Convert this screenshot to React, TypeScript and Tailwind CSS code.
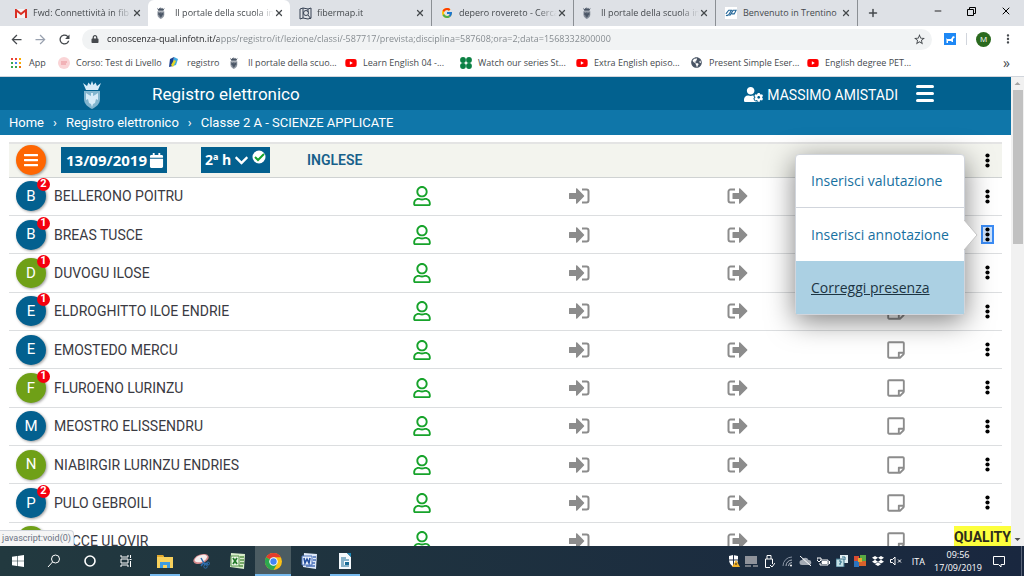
import { ReactNode, useState } from 'react';

import { FaBars, FaCalendar, FaChevronDown, FaDropbox, FaGlobeAmericas, FaLock, FaRegStickyNote, FaRegUser, FaUserCog, FaYoutube } from 'react-icons/fa';
import { FcGoogle } from 'react-icons/fc';
import { LuMinus, LuPlus, LuX } from 'react-icons/lu';
import { MdArrowBack, MdArrowForward, MdMoreVert, MdRefresh, MdStarBorder } from 'react-icons/md';

type Student = { name: string; green?: boolean; badge?: number };

const students: Student[] = [
	{ name: 'BELLERONO POITRU', badge: 2 },
	{ name: 'BREAS TUSCE', badge: 1 },
	{ name: 'DUVOGU ILOSE', badge: 1, green: true },
	{ name: 'ELDROGHITTO ILOE ENDRIE', badge: 1 },
	{ name: 'EMOSTEDO MERCU' },
	{ name: 'FLUROENO LURINZU', badge: 1, green: true },
	{ name: 'MEOSTRO ELISSENDRU' },
	{ name: 'NIABIRGIR LURINZU ENDRIES', green: true },
	{ name: 'PULO GEBROILI', badge: 2 },
	{ name: 'RUCCE ULOVIR', green: true },
];

function Crest({ className }: { className: string }) {
	return (
		<svg viewBox="0 0 18 28" className={className} fill="currentColor" aria-hidden="true">
			<path d="M0 2l4 3 1.500-3.500L7.500 4 9 0l1.500 4 2-2.500L14 5l4-3-3 7H3z" />
			<path d="M1 10h16v8c0 5-4 8-8 10-4-2-8-5-8-10z" opacity=".6" />
			<path d="M3 12l3 2 2 1V12h2v3l2-1 3-2v7l-2-1-1 4-2 1-1 3-1-3-2-1-1-4-2 1z" />
		</svg>
	);
}

function MapIcon() {
	return (
		<svg viewBox="0 0 13 13" className="size-[13px] text-gray-700" fill="none" stroke="currentColor" aria-hidden="true">
			<path d="M1 2l3-1v10l-3 1zM4 1l5 1 3-1v10l-3 1-5-1M9 2v3" />
			<circle cx="7" cy="6" r="2.500" />
			<path d="M9 8l3 4" />
		</svg>
	);
}

function Gmail() {
	return (
		<svg viewBox="0 0 12 9" className="w-3" aria-hidden="true">
			<path d="M1 0h10v9H1z" fill="#f4f4f4" />
			<path d="M1 9V1l5 4 5-4v8" fill="none" stroke="#d93025" strokeWidth="2" />
		</svg>
	);
}

function Trentino() {
	return (
		<svg viewBox="0 0 13 12" className="size-3 bg-white" fill="none" stroke="#27699b" strokeWidth="1.200" aria-hidden="true">
			<path d="M1 7l3-4 3 0-3 5-2 1M5 9l4-6 3 0-2 4-3 0M1 9l3-1M4 3l4 0" />
		</svg>
	);
}

const tabs = [
	{ title: 'Fwd: Connettività in fib', icon: <Gmail /> },
	{ title: 'Il portale della scuola in', icon: <Crest className="h-3 text-gray-600" />, active: true },
	{ title: 'fibermap.it', icon: <MapIcon /> },
	{ title: 'depero rovereto - Cerca', icon: <FcGoogle className="size-3" /> },
	{ title: 'Il portale della scuola in', icon: <Crest className="h-3 text-gray-600" /> },
	{ title: 'Benvenuto in Trentino', icon: <Trentino />, whole: true },
];

function TabStrip() {
	return (
		<header className="flex h-[26px] shrink-0 bg-[#dee1e6] pl-[6px] text-[9px] text-[#45494d]">
			{tabs.map((tab, i) => (
				<div
					key={i}
					className={`flex w-[142px] min-w-0 items-center pr-[6px] pl-[9px] ${tab.active ? 'rounded-t-md bg-white' : i > 1 ? 'border-r border-[#8b8f94] bg-clip-padding' : ''}`}
				>
					<span className="flex w-[18px] shrink-0 items-center">{tab.icon}</span>
					<span className={`min-w-0 flex-1 overflow-hidden whitespace-nowrap ${tab.whole ? '' : 'mask-r-from-80%'}`}>{tab.title}</span>
					<button type="button" aria-label="Chiudi scheda" className="shrink-0">
						<LuX className="size-[10px]" strokeWidth={3} />
					</button>
				</div>
			))}
			<button type="button" aria-label="Nuova scheda" className="ml-[9px]">
				<LuPlus className="size-3" strokeWidth={3} />
			</button>
			<div className="ml-auto flex items-center gap-6 pr-[12px] pb-1 text-black">
				<button type="button" aria-label="Riduci">
					<LuMinus className="size-[10px]" />
				</button>
				<button type="button" aria-label="Ripristina">
					<svg viewBox="0 0 9 9" className="size-[9px]" fill="none" stroke="currentColor">
						<path d="M.500 2.500h6v6h-6zM2.500 2.500v-2h6v6h-2" />
					</svg>
				</button>
				<button type="button" aria-label="Chiudi">
					<LuX className="size-3" />
				</button>
			</div>
		</header>
	);
}

function Toolbar() {
	return (
		<div className="flex h-[26px] shrink-0 items-center bg-white text-[#45494d]">
			<div className="flex w-[82px] shrink-0 items-center gap-[9px] pl-[9px]">
				<button type="button" aria-label="Indietro">
					<MdArrowBack className="size-[15px]" />
				</button>
				<button type="button" aria-label="Avanti" className="text-gray-400">
					<MdArrowForward className="size-[15px]" />
				</button>
				<button type="button" aria-label="Ricarica">
					<MdRefresh className="size-[15px]" />
				</button>
			</div>
			<div className="flex h-[21px] flex-1 items-center rounded-full bg-[#f1f3f4] pr-[6px] pl-[9px]">
				<FaLock className="size-2" />
				<input
					type="text"
					aria-label="Indirizzo"
					defaultValue="conoscenza-qual.infotn.it/apps/registro/it/lezione/classi/-587717/prevista;disciplina=587608;ora=2;data=1568332800000"
					className="ml-2 flex-1 bg-[linear-gradient(90deg,#202124_112px,#80868b_112px)] bg-clip-text text-[9px] text-transparent outline-none"
				/>
				<button type="button" aria-label="Aggiungi ai preferiti">
					<MdStarBorder className="size-[13px]" />
				</button>
			</div>
			<div className="flex items-center pl-3">
				<button type="button" aria-label="Estensione" className="size-3 bg-[#1e88f5] text-white">
					<svg viewBox="0 0 12 12" fill="currentColor">
						<path d="M2 5l1 1h4l2-3 2 1-1 1-1 1v3H8L7 8H4v2H2.500V7z" />
					</svg>
				</button>
				<span className="ml-[10px] h-3 w-px bg-gray-300" />
				<button type="button" className="ml-[9px] size-[15px] rounded-full bg-[#2b6a1f] text-[8px] text-white">
					M
				</button>
				<button type="button" aria-label="Menu" className="mr-[9px] ml-[10px]">
					<MdMoreVert className="size-[14px]" />
				</button>
			</div>
		</div>
	);
}

const youtube = <FaYoutube className="size-3 text-[#f00]" />;

const bookmarks = [
	{
		label: 'App',
		width: 'w-[47px]',
		icon: (
			<svg viewBox="0 0 10 10" className="size-[10px]">
				{['#ea4335', '#ea4335', '#f9ab00', '#34a853', '#4285f4', '#f9ab00', '#34a853', '#34a853', '#e8710a'].map((fill, i) => (
					<rect key={i} x={(i % 3) * 4} y={Math.floor(i / 3) * 4} width="2" height="2" fill={fill} />
				))}
			</svg>
		),
	},
	{
		label: 'Corso: Test di Livello',
		width: 'w-[111px]',
		icon: (
			<svg viewBox="0 0 12 12" className="size-3">
				<circle cx="6" cy="6" r="6" fill="#fad4d6" />
				<path d="M3 5h6M3 7h5" stroke="#e99097" />
			</svg>
		),
	},
	{
		label: 'registro',
		width: 'w-[61px]',
		icon: (
			<svg viewBox="0 0 10 11" className="h-[11px]">
				<path d="M1 2l4-2-1 9-4 1z" fill="#1a3f8f" />
				<path d="M5 0l4 2-2 6-3 1z" fill="#3fa9e0" />
				<path d="M2 8l3-5 2 1-3 6z" fill="#e4d626" />
			</svg>
		),
	},
	{ label: 'Il portale della scuo...', width: 'w-[115px]', icon: <Crest className="h-3 text-gray-600" /> },
	{ label: 'Learn English 04 -...', width: 'w-[115px]', icon: youtube },
	{
		label: 'Watch our series St...',
		width: 'w-[116px]',
		icon: (
			<svg viewBox="0 0 12 12" className="size-3" fill="#0b8043">
				<circle cx="3" cy="3" r="2.900" />
				<circle cx="9" cy="3" r="2.900" />
				<circle cx="3" cy="9" r="2.900" />
				<circle cx="9" cy="9" r="2.900" />
			</svg>
		),
	},
	{ label: 'Extra English episo...', width: 'w-[115px]', icon: youtube },
	{ label: 'Present Simple Eser...', width: 'w-[116px]', icon: <FaGlobeAmericas className="size-[11px] text-gray-600" /> },
	{ label: 'English degree PET...', width: 'w-[115px]', icon: youtube },
];

function BookmarkBar() {
	return (
		<nav aria-label="Preferiti" className="flex h-[25px] shrink-0 items-center border-b border-gray-300 bg-white pb-[3px] pl-[11px] text-[9px] text-[#45494d]">
			{bookmarks.map((item, i) => (
				<a key={i} href="#" className={`flex shrink-0 items-center whitespace-nowrap ${item.width}`}>
					<span className="w-[18px] shrink-0">{item.icon}</span>
					{item.label}
				</a>
			))}
			<button type="button" aria-label="Altri preferiti" className="mr-[14px] ml-auto text-sm leading-none">
				»
			</button>
		</nav>
	);
}

function Dots() {
	return (
		<svg viewBox="0 0 5 15" className="h-[15px] w-[5px]" fill="#000" aria-hidden="true">
			<circle cx="2.500" cy="2.500" r="2.100" />
			<circle cx="2.500" cy="7.500" r="2.100" />
			<circle cx="2.500" cy="12.500" r="2.100" />
		</svg>
	);
}

function EnterIcon() {
	return (
		<svg viewBox="0 0 21 16" className="mx-auto w-[21px]" fill="#8c8c8c">
			<path d="M0 5.500a.500.500 0 0 1 .500-.500H7V1a.700.700 0 0 1 1.200-.500L15 7.500a.700.700 0 0 1 0 1L8.200 15.500A.700.700 0 0 1 7 15v-4H.500a.500.500 0 0 1-.500-.500z" />
			<path d="M13 1.500h4.500a2 2 0 0 1 2 2v9a2 2 0 0 1-2 2H13" fill="none" stroke="#8c8c8c" strokeWidth="2" />
		</svg>
	);
}

function ExitIcon() {
	return (
		<svg viewBox="0 0 21 16" className="mx-auto w-[21px]" fill="#8c8c8c">
			<path d="M5.500 5.500a.500.500 0 0 1 .500-.500h6V1a.700.700 0 0 1 1.200-.500l7 7a.700.700 0 0 1 0 1l-7 7A.700.700 0 0 1 12 15v-4H6a.500.500 0 0 1-.500-.500z" />
			<path d="M8 1.500H3.500a2 2 0 0 0-2 2v9a2 2 0 0 0 2 2H8" fill="none" stroke="#8c8c8c" strokeWidth="2" />
		</svg>
	);
}

function RowMenu() {
	return (
		<div className="absolute -top-[71px] right-[29px] z-10 w-[170px] rounded-sm border border-gray-300 bg-white font-['Open_Sans',sans-serif] text-sm whitespace-nowrap text-[#17709f] shadow-[0_6px_28px_rgba(0,0,0,0.5)]">
			<a href="#" className="flex h-[53px] items-center border-b border-gray-300 px-[15px]">
				Inserisci valutazione
			</a>
			<a href="#" className="flex h-[53px] items-center px-[15px]">
				Inserisci annotazione
			</a>
			<a href="#" className="flex h-[53px] items-center bg-[#abd0e3] px-[15px] text-[#1c3442] underline">
				Correggi presenza
			</a>
			<svg viewBox="0 0 14 30" className="absolute top-[65px] -right-[14px] w-[14px]" aria-hidden="true">
				<path d="M0 0l13 15L0 30" fill="#fff" stroke="#c4c4c4" />
			</svg>
		</div>
	);
}

function StudentRow({ student, open, onToggle }: { student: Student; open: boolean; onToggle: () => void }) {
	return (
		<tr className="border-b border-[#dcdee0]">
			<td className="pl-[7px]">
				<div className="flex items-center">
					<span className={`relative flex size-[30px] items-center justify-center rounded-full text-[15px] text-white shadow-[1px_1px_3px_rgba(0,0,0,0.4)] ${student.green ? 'bg-[#6fa017]' : 'bg-[#03608f]'}`}>
						{student.name[0]}
						{student.badge && (
							<span className="absolute -top-[3px] -right-[4px] flex size-[13px] items-center justify-center rounded-full bg-[#f5000f] text-[11px] font-bold">{student.badge}</span>
						)}
					</span>
					<span className="pl-2 text-sm text-[#3a3a42]">{student.name}</span>
				</div>
			</td>
			<td>
				<FaRegUser className="mx-auto size-5 text-[#17a32b]" />
			</td>
			<td>
				<EnterIcon />
			</td>
			<td>
				<ExitIcon />
			</td>
			<td>
				<FaRegStickyNote className="mx-auto size-5 text-[#8c8c8c]" />
			</td>
			<td className="pr-[2px]">
				<div className="relative mx-auto w-[13px]">
					<button type="button" aria-label="Azioni" onClick={onToggle} className={`flex h-[19px] w-[13px] items-center justify-center ${open ? 'border-2 border-[#3b8cf5] bg-[#cfe3fb]' : ''}`}>
						<Dots />
					</button>
					{open && <RowMenu />}
				</div>
			</td>
		</tr>
	);
}

function Register() {
	const [openRow, setOpenRow] = useState<number | null>(1);

	return (
		<div className="px-[9px] pt-[7px]">
			<table className="h-[419px] w-full table-fixed border-collapse">
				<colgroup>
					<col />
					<col className="w-[158px]" />
					<col className="w-[158px]" />
					<col className="w-[158px]" />
					<col className="w-[158px]" />
					<col className="w-[27px]" />
				</colgroup>
				<thead>
					<tr className="h-[34px] border-t-2 border-b border-t-[#e4e4e4] border-b-[#cfd2d2] bg-[#f3f4ee]">
						<th colSpan={5} className="pl-[7px] text-[15px]">
							<div className="flex items-center">
								<button type="button" aria-label="Elenco" className="flex size-[30px] items-center justify-center rounded-full bg-[#fe6602] text-white shadow-[1px_1px_3px_rgba(0,0,0,0.4)]">
									<FaBars className="size-4" />
								</button>
								<button type="button" className="ml-[15px] flex h-[26px] w-[106px] items-center justify-between bg-[#03608f] pr-[3px] pl-[5px] font-['Open_Sans',sans-serif] text-[15px] font-bold text-white">
									13/09/2019
									<FaCalendar className="size-[15px]" />
								</button>
								<button type="button" className="ml-[34px] flex h-[26px] w-[69px] items-center justify-between bg-[#03608f] px-1 font-['Open_Sans',sans-serif] text-sm font-bold whitespace-nowrap text-white">
									2ª h
									<FaChevronDown className="size-[15px]" />
									<svg viewBox="0 0 14 14" className="mb-[6px] size-[14px]" aria-hidden="true">
										<circle cx="7" cy="7" r="6.500" fill="#fff" />
										<path d="M3 7l3 3 6-6" fill="none" stroke="#17a32b" strokeWidth="2" />
									</svg>
								</button>
								<span className="ml-[37px] text-sm font-semibold text-[#17608a]">INGLESE</span>
							</div>
						</th>
						<th className="pr-[2px]">
							<button type="button" aria-label="Azioni classe" className="mx-auto block">
								<Dots />
							</button>
						</th>
					</tr>
				</thead>
				<tbody>
					{students.map((student, i) => (
						<StudentRow key={student.name} student={student} open={openRow === i} onToggle={() => setOpenRow(openRow === i ? null : i)} />
					))}
				</tbody>
			</table>
		</div>
	);
}

function TaskButton({ label, state, children }: { label: string; state?: 'open' | 'active'; children: ReactNode }) {
	return (
		<button type="button" aria-label={label} className={`flex w-9 flex-col items-center ${state === 'active' ? 'bg-[#4b5c62]' : ''}`}>
			<span className="flex h-7 items-center pt-[2px]">{children}</span>
			{state && <span className={`h-[2px] bg-[#76b9ed] ${state === 'active' ? 'w-full' : 'w-[30px]'}`} />}
		</button>
	);
}

function Taskbar() {
	return (
		<footer className="flex h-[30px] shrink-0 bg-linear-to-r from-[#22393f] to-[#19273f] text-white">
			<TaskButton label="Start">
				<svg viewBox="0 0 12 12" className="size-3" fill="#fff">
					<path d="M0 1.700L5 1v4.700H0zM5.600 .900L12 0v5.700H5.600zM0 6.300h5V11l-5-.700zM5.600 6.300H12V12l-6.400-.900z" />
				</svg>
			</TaskButton>
			<TaskButton label="Cerca">
				<svg viewBox="0 0 14 14" className="size-[14px]" fill="none" stroke="#fff">
					<circle cx="8.500" cy="5" r="4" />
					<path d="M5.500 8L1 13" />
				</svg>
			</TaskButton>
			<TaskButton label="Cortana">
				<svg viewBox="0 0 12 12" className="size-3" fill="none" stroke="#fff" strokeWidth="1.600">
					<circle cx="6" cy="6" r="5" />
				</svg>
			</TaskButton>
			<TaskButton label="Visualizzazione attività">
				<svg viewBox="0 0 12 12" className="size-3" fill="none" stroke="#fff">
					<path d="M1 0v2h7V0M1 12v-2h7v2M1 4h7v4H1zM10.500 0v3M10.500 6v6M9.500 4.500h2" />
				</svg>
			</TaskButton>
			<span className="w-[3px]" />
			<TaskButton label="Esplora file" state="open">
				<svg viewBox="0 0 16 14" className="w-4">
					<path d="M0 1h6l1 2h9v11H0z" fill="#f8d15c" />
					<path d="M0 1h6l1 2H0z" fill="#e2a92d" />
					<path d="M3 14V8h10v6h-3v-3H6v3z" fill="#3d9be0" />
				</svg>
			</TaskButton>
			<TaskButton label="Strumento di cattura">
				<svg viewBox="0 0 17 16" className="w-[17px]">
					<ellipse cx="8" cy="6" rx="8" ry="4.500" fill="#d5898b" transform="rotate(-20 8 6)" />
					<ellipse cx="8" cy="5.500" rx="6.500" ry="3.300" fill="#f7eeee" transform="rotate(-20 8 6)" />
					<path d="M8 5l4 7M11 9l-3 4M10 10l5 1" stroke="#2d6eae" strokeWidth="1.500" />
					<circle cx="12.500" cy="13.500" r="1.700" fill="none" stroke="#2d6eae" />
					<circle cx="15" cy="10.500" r="1.500" fill="none" stroke="#2d6eae" />
				</svg>
			</TaskButton>
			<TaskButton label="Excel">
				<svg viewBox="0 0 17 16" className="w-[17px]">
					<path d="M2 0l14 1-1 15-14-2z" fill="#d8edcb" />
					<path d="M11 4h4M11 7h4M11 10h4M10 13h4" stroke="#57944a" strokeWidth="1.500" />
					<path d="M2 3h8v10H2z" fill="#edf7e7" stroke="#57944a" />
					<path d="M4 5l4 6M8 5l-4 6" stroke="#237a2b" strokeWidth="1.800" />
				</svg>
			</TaskButton>
			<TaskButton label="Chrome" state="active">
				<svg viewBox="0 0 16 16" className="size-[17px]">
					<circle cx="8" cy="8" r="8" fill="#fbc116" />
					<path d="M8 8L1.070 4A8 8 0 0 1 14.930 4H8z" fill="#e33b2e" />
					<path d="M1.070 4A8 8 0 0 0 8 16l3.500-6L8 8z" fill="#2da94f" />
					<circle cx="8" cy="8" r="4" fill="#fff" />
					<circle cx="8" cy="8" r="3" fill="#4285f4" />
				</svg>
			</TaskButton>
			<TaskButton label="Word">
				<svg viewBox="0 0 17 16" className="w-[17px]">
					<path d="M3 0l13 1-1 15-13-2z" fill="#dfe9f8" />
					<path d="M12 4h3M12 7h3M11 10h3M5 13h9" stroke="#4a70b8" strokeWidth="1.300" />
					<path d="M1 3h10v9H1z" fill="#e9f0fb" stroke="#4a70b8" />
					<path d="M3 5l1 5 2-4 2 4 1-5" fill="none" stroke="#244f9e" strokeWidth="1.600" />
				</svg>
			</TaskButton>
			<TaskButton label="Writer" state="open">
				<svg viewBox="0 0 14 16" className="w-[14px]">
					<path d="M1 0h8l4 4v12H1z" fill="#f5f9fc" />
					<path d="M9 0h4v4z" fill="#1e88b8" />
					<path d="M3 5h5M3 7h8M3 9h3M3 11h3M3 13h8" stroke="#1a6c97" />
					<path d="M7 9h4v3H7z" fill="#1a6c97" />
				</svg>
			</TaskButton>

			<div className="ml-auto flex items-center text-[9px] leading-[13px]">
				<div className="flex items-center">
					<span className="flex w-[18px] justify-center">
						<svg viewBox="0 0 12 12" className="size-3">
							<path d="M1 1l4-1 5 1v4c0 3-2 5-4.500 7C3 10 1 8 1 5z" fill="#fff" />
							<path d="M5.500 0v11M1 5h9" stroke="#22304a" />
							<path d="M8 5l4 7H4z" fill="#f3b229" />
							<path d="M8 8v2" stroke="#222" />
						</svg>
					</span>
					<span className="flex w-[18px] justify-center">
						<svg viewBox="0 0 13 11" className="w-[13px]">
							<path d="M0 0h12v8H0z" fill="#8f939b" />
							<path d="M0 10h6M8 10h5" stroke="#8f939b" strokeWidth="1.500" />
						</svg>
					</span>
					<span className="flex w-[18px] justify-center">
						<svg viewBox="0 0 10 13" className="h-[13px]" fill="none" stroke="#fff">
							<path d="M2 4V.500h4V4M.500 4h7v5M.500 4v8.500H5M5 10l2 2 3-4" />
						</svg>
					</span>
					<span className="flex w-[18px] justify-center">
						<svg viewBox="0 0 11 11" className="w-[11px]" fill="none" stroke="#8792a2">
							<path d="M1 10A9 9 0 0 1 10 1" />
							<path d="M4 10a6 6 0 0 1 6-6M6.500 10A3.500 3.500 0 0 1 10 6.500" stroke="#aab2bd" />
							<circle cx="9" cy="9.500" r="1" fill="#fff" stroke="none" />
						</svg>
					</span>
					<span className="flex w-[18px] justify-center">
						<svg viewBox="0 0 13 10" className="w-[13px]">
							<path d="M3 9a2.500 2.500 0 0 1 0-5 3.500 3.500 0 0 1 6.500 0A2.500 2.500 0 0 1 10 9z" fill="#a4abb5" />
							<path d="M1 0l11 10" stroke="#fff" />
						</svg>
					</span>
					<span className="flex w-[18px] justify-center">
						<svg viewBox="0 0 13 9" className="w-[13px]" fill="none" stroke="#fff">
							<path d="M4 3h7v5H3V6M0 1h4v2L2 5 0 3z" />
							<path d="M5 4.500h5v2H5z" fill="#fff" />
							<path d="M12.500 4v3" />
						</svg>
					</span>
					<span className="flex w-[18px] justify-center">
						<svg viewBox="0 0 12 12" className="size-3">
							<path d="M4 0h8v8H4z" fill="#e2eef2" />
							<path d="M0 4h8v8H0z" fill="#c4e0e6" stroke="#3b6f86" />
							<path d="M6 2h3v3M3 6h2v2H4v2" fill="none" stroke="#2b6a86" />
						</svg>
					</span>
					<span className="flex w-[18px] justify-center">
						<svg viewBox="0 0 12 12" className="size-3">
							<path d="M0 1h5v5H0z" fill="#d94a32" />
							<path d="M6 0h6v6H6z" fill="#58a944" />
							<path d="M0 6h5v6H0z" fill="#2c74bd" />
							<path d="M5 6h7v5H5z" fill="#d8622c" />
							<path d="M4 3h4v4H4z" fill="#e5a92c" />
						</svg>
					</span>
					<span className="flex w-[18px] justify-center">
						<FaDropbox className="size-3" />
					</span>
					<span className="flex w-[18px] justify-center">
						<svg viewBox="0 0 12 10" className="w-3" fill="none" stroke="#fff">
							<path d="M.500 3.500h2L5 1v8L2.500 6.500h-2zM8 3.500l3 3M11 3.500l-3 3" />
						</svg>
					</span>
				</div>
				<span className="ml-[7px]">ITA</span>
				<time dateTime="2019-09-17T09:56" className="ml-[7px] w-[52px] text-center">
					09:56
					<br />
					17/09/2019
				</time>
				<button type="button" aria-label="Notifiche" className="mr-[16px] ml-[9px]">
					<svg viewBox="0 0 12 12" className="size-3" fill="none" stroke="#fff">
						<path d="M.500 1.500h11v8H8v2.500L5.500 9.500h-5z" />
					</svg>
				</button>
				<span className="mr-[2px] h-[30px] w-px bg-[#5a6478]" />
			</div>
		</footer>
	);
}

export default function App() {
	return (
		<div className="flex h-screen flex-col overflow-hidden bg-white font-['Open_Sans',sans-serif]">
			<TabStrip />
			<Toolbar />
			<BookmarkBar />

			<div className="flex min-h-0 flex-1">
				<main className="relative flex-1 overflow-hidden font-[Roboto,sans-serif]">
					<div className="flex h-[33px] items-center bg-[#02618f] pt-[2px] text-white">
						<Crest className="ml-[83px] h-7 text-[#d8ecf8]" />
						<h1 className="ml-[51px] text-[17px]">Registro elettronico</h1>
						<a href="#" className="ml-auto flex items-center gap-1 text-sm">
							<FaUserCog className="size-[19px]" />
							MASSIMO AMISTADI
						</a>
						<button type="button" aria-label="Menu principale" className="mr-[77px] mb-[2px] ml-[18px] flex w-[18px] flex-col gap-1">
							<span className="h-[3px] rounded-xs bg-white" />
							<span className="h-[3px] rounded-xs bg-white" />
							<span className="h-[3px] rounded-xs bg-white" />
						</button>
					</div>
					<nav aria-label="Percorso" className="flex h-[25px] items-center gap-[9px] bg-[#0f76a9] pt-px pl-[9px] text-[13px] text-white">
						<a href="#">Home</a>
						<span>›</span>
						<a href="#">Registro elettronico</a>
						<span>›</span>
						<span>Classe 2 A - SCIENZE APPLICATE</span>
					</nav>
					<Register />

					<div className="absolute bottom-0 left-0 rounded-tr-sm border-t border-r border-gray-300 bg-[#f5f5f5] px-[2px] text-[9px] leading-[15px] text-gray-500">javascript:void(0)</div>
					<div className="absolute right-0 bottom-0 bg-[#fdff3d] pt-[2px] text-sm leading-[18px] font-bold text-[#2d2d1c]">QUALITY</div>
				</main>
				<div className="flex w-[13px] flex-col items-center bg-[#f1f1f1]" aria-hidden="true">
					<svg viewBox="0 0 13 13" className="w-[13px]" fill="#a3a3a3">
						<path d="M6.500 5l3 3h-6z" />
					</svg>
					<span className="h-[154px] w-[10px] bg-[#c1c1c1]" />
					<svg viewBox="0 0 13 13" className="mt-auto w-[13px]" fill="#505050">
						<path d="M6.500 8l3-3h-6z" />
					</svg>
				</div>
			</div>

			<Taskbar />
		</div>
	);
}
